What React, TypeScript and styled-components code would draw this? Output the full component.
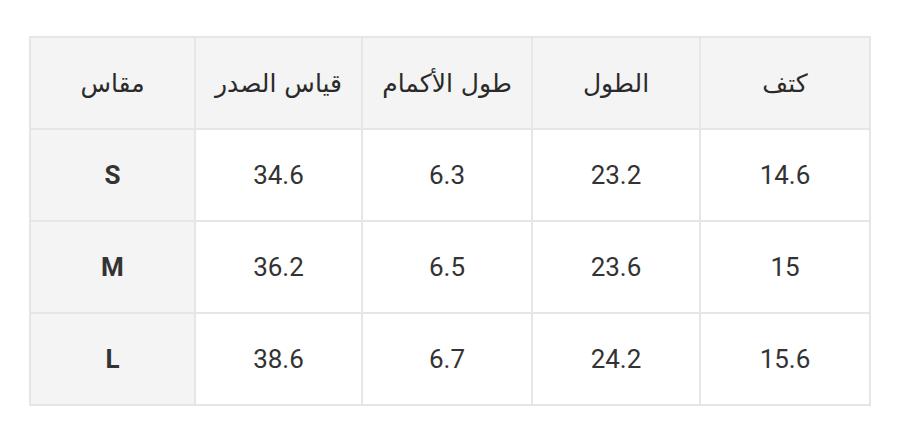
import styled, { createGlobalStyle } from "styled-components"

const GlobalStyle = createGlobalStyle`
	html, body {
		margin: 0;
		padding: 0;
		background: #ffffff;
	}
	body {
		font-family: Roboto, "DejaVu Sans", sans-serif;
		color: #333333;
	}
`

const headers = ["مقاس", "قياس الصدر", "طول الأكمام", "الطول", "كتف"]
const colWidths = [165, 167, 170, 168, 170]

const rows = [
	{ size: "S", values: ["34.6", "6.3", "23.2", "14.6"] },
	{ size: "M", values: ["36.2", "6.5", "23.6", "15"] },
	{ size: "L", values: ["38.6", "6.7", "24.2", "15.6"] },
]

const App = () => {
	return (
		<>
			<GlobalStyle />
			<Page>
				<SizeTable>
					<colgroup>
						{colWidths.map((w, i) => (
							<col key={i} style={{ width: w }} />
						))}
					</colgroup>
					<thead>
						<tr>
							{headers.map((h) => (
								<HeadCell key={h}>{h}</HeadCell>
							))}
						</tr>
					</thead>
					<tbody>
						{rows.map((row) => (
							<tr key={row.size}>
								<Cell shaded bold>
									{row.size}
								</Cell>
								{row.values.map((v, i) => (
									<Cell key={i}>{v}</Cell>
								))}
							</tr>
						))}
					</tbody>
				</SizeTable>
			</Page>
		</>
	)
}

const Page = styled.div`
	padding: 36px 29px 0 29px;
`

const SizeTable = styled.table`
	width: 842px;
	table-layout: fixed;
	border-collapse: collapse;
	border: 2px solid #ececec;
`

const HeadCell = styled.th`
	height: 90px;
	padding: 0;
	background: #f4f4f4;
	border: 2px solid #e6e6e6;
	font-family: "DejaVu Sans", Roboto, sans-serif;
	font-weight: 400;
	font-size: 25px;
	color: #2a2a2a;
	text-align: center;
	vertical-align: middle;
`

const Cell = styled.td<{ shaded?: boolean; bold?: boolean }>`
	height: 90px;
	padding: 0;
	background: ${(p) => (p.shaded ? "#f4f4f4" : "#ffffff")};
	border: 2px solid #e6e6e6;
	font-family: Roboto, "Liberation Sans", sans-serif;
	font-weight: ${(p) => (p.bold ? 700 : 400)};
	font-size: 26px;
	color: #333333;
	text-align: center;
	vertical-align: middle;
`

export default App
